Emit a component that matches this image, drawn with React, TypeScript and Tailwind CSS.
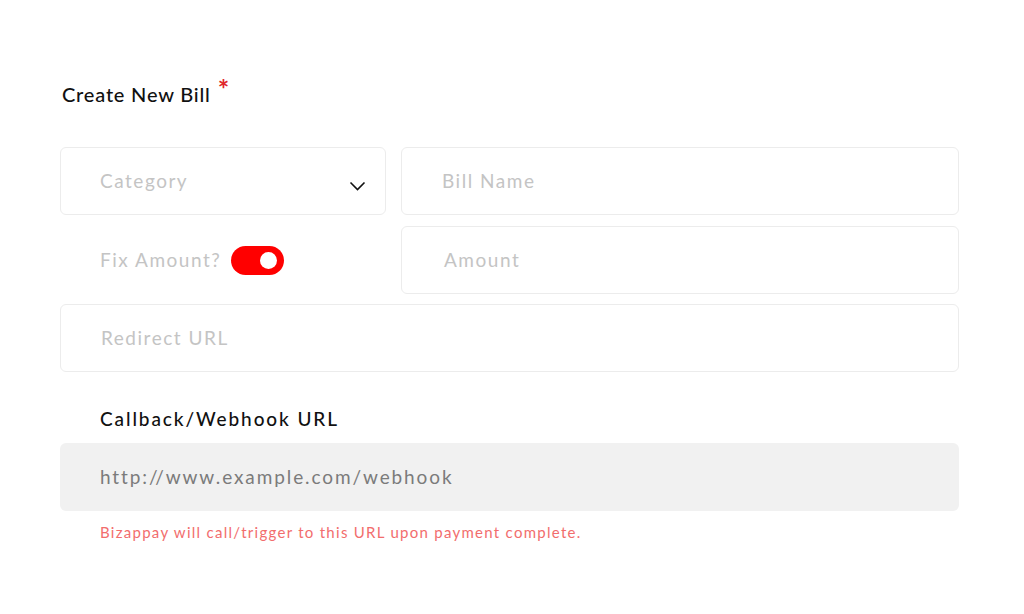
export default function App()
{
    const box = "h-[68px] rounded-md border border-[#ececec] bg-white flex items-center";
    const hint = "text-[19px] text-[#c4c4c4] tracking-[0.08em]";

    return (
        <div className="w-[1024px] h-[614px] bg-white font-['Lato',sans-serif] pt-[78px] pl-[60px]">
            <div className="w-[899px]">
                <h1 className="pl-[2px] text-[20px] leading-[32px] font-medium tracking-[0.04em] text-[#111] flex items-start">
                    Create New Bill
                    <span className="ml-[7px] -mt-[5px] text-[#e0262b] text-[27px] font-bold">*</span>
                </h1>

                <div className="mt-[37px] grid grid-cols-[326px_1fr] gap-x-[15px] gap-y-[11px]">
                    <div className={box + " pl-[39px] pr-[19px] justify-between"}>
                        <span className={hint}>Category</span>
                        <svg width="17" height="10" viewBox="0 0 17 10" className="mt-[10px]">
                            <path d="M1.5 1.5 L8.5 8.5 L15.5 1.5" fill="none" stroke="#111" strokeWidth="1.6" />
                        </svg>
                    </div>
                    <div className={box + " pl-[40px]"}>
                        <span className={hint}>Bill Name</span>
                    </div>

                    <div className="h-[68px] flex items-center pl-[40px]">
                        <span className={hint}>Fix Amount?</span>
                        <div className="ml-[10px] w-[53px] h-[29px] rounded-full bg-[#ff0000] flex items-center justify-end pr-[7px]">
                            <div className="w-[17px] h-[17px] rounded-full bg-white" />
                        </div>
                    </div>
                    <div className={box + " pl-[42px]"}>
                        <span className={hint}>Amount</span>
                    </div>

                    <div className={box + " col-span-2 pl-[40px] mt-[-1px]"}>
                        <span className={hint}>Redirect URL</span>
                    </div>
                </div>

                <div className="mt-[34px] pl-[40px] text-[19px] leading-[26px] font-medium tracking-[0.1em] text-[#111]">
                    Callback/Webhook URL
                </div>

                <div className="mt-[11px] h-[68px] rounded-md bg-[#f1f1f1] flex items-center pl-[40px]">
                    <span className="text-[19px] text-[#7b7b7b] tracking-[0.1em]">http://www.example.com/webhook</span>
                </div>

                <p className="mt-[11px] pl-[40px] text-[15px] leading-[20px] tracking-[0.085em] text-[#f26d6d]">
                    Bizappay will call/trigger to this URL upon payment complete.
                </p>
            </div>
        </div>
    );
}
